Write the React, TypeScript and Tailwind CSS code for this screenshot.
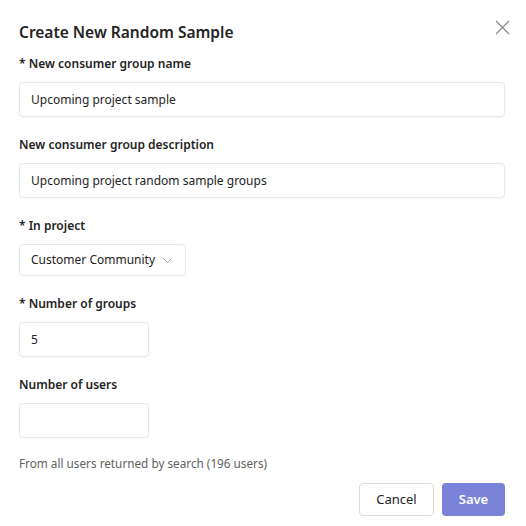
import React from "react";

const Field: React.FC<{ label: string; children: React.ReactNode }> = ({ label, children }) => (
  <div className="flex flex-col">
    <label className="text-[12px] font-semibold text-[#242424] leading-5 h-5">{label}</label>
    <div className="mt-[8px]">{children}</div>
  </div>
);

const boxCls =
  "flex items-center h-[35px] px-[11px] rounded-[4px] border border-[#e8e8e8] bg-white shadow-[0_1px_2px_rgba(0,0,0,0.04)] text-[12px] text-[#242424] whitespace-nowrap";

export default function App() {
  return (
    <div
      className="w-[526px] h-[526px] bg-white relative overflow-hidden"
      style={{ fontFamily: '"Noto Sans", "Open Sans", sans-serif' }}
    >
      {/* CLOSE */}
      <button className="absolute top-[20px] right-[16px] w-[15px] h-[15px] text-[#8a8a8a]">
        <svg viewBox="0 0 15 15" width="15" height="15" fill="none" stroke="currentColor" strokeWidth="1.2">
          <path d="M1 1 L14 14 M14 1 L1 14" />
        </svg>
      </button>

      <div className="pl-[19px] pr-[21px] pt-[20px] flex flex-col">
        <h1 className="text-[15.5px] font-semibold text-[#242424] leading-6 h-6">Create New Random Sample</h1>

        <div className="mt-[10px] flex flex-col gap-[18px]">
          <Field label="* New consumer group name">
            <div className={boxCls}>Upcoming project sample</div>
          </Field>

          <Field label="New consumer group description">
            <div className={boxCls}>Upcoming project random sample groups</div>
          </Field>

          <Field label="* In project">
            <div className={`${boxCls} w-[167px] !h-[32px] justify-between pr-[13px]`}>
              <span>Customer Community</span>
              <svg viewBox="0 0 9 5" width="9" height="5" fill="none" stroke="#a0a0a0" strokeWidth="1">
                <path d="M0.5 0.5 L4.5 4.5 L8.5 0.5" />
              </svg>
            </div>
          </Field>

          <Field label="* Number of groups">
            <div className={`${boxCls} w-[130px]`}>5</div>
          </Field>

          <Field label="Number of users">
            <div className={`${boxCls} w-[130px]`}></div>
          </Field>
        </div>

        <p className="mt-[15px] text-[11.75px] text-[#616161] leading-5">From all users returned by search (196 users)</p>

        <div className="mt-[10px] flex justify-end gap-2">
          <button className="h-[33px] w-[75px] rounded-[4px] border border-[#dcdcdc] bg-white text-[13px] text-[#242424]">
            Cancel
          </button>
          <button className="h-[33px] w-[63px] rounded-[4px] bg-[#7b83d8] text-[13px] font-semibold text-white">
            Save
          </button>
        </div>
      </div>
    </div>
  );
}
